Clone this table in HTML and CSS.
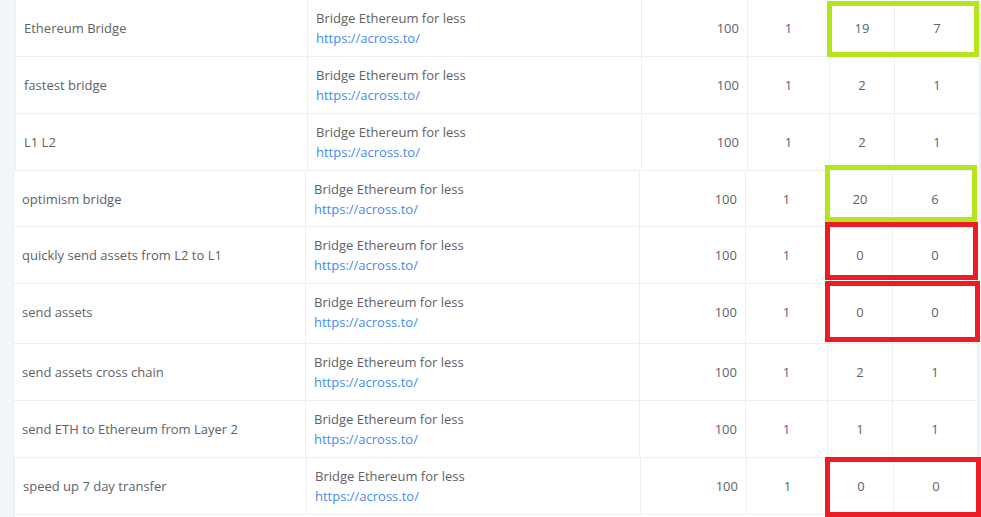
FILE: index.html
```html
<!DOCTYPE html>
<html lang="en">
  <head>
    <meta charset="UTF-8" />
    <meta name="viewport" content="width=device-width, initial-scale=1.0" />
    <title>Keyword Ranking</title>
    <link rel="stylesheet" href="styles.css">
  </head>
  <body>
    <div class="page">
      <!-- first capture -->
      <div class="table seg-a">
        <div class="row first">
          <div class="cell">Ethereum Bridge</div>
          <div class="cell ad"><span>Bridge Ethereum for less</span><a href="#">https://across.to/</a></div>
          <div class="cell num">100</div>
          <div class="cell mid">1</div>
          <div class="cell mid">19</div>
          <div class="cell mid">7</div>
        </div>
        <div class="row">
          <div class="cell">fastest bridge</div>
          <div class="cell ad"><span>Bridge Ethereum for less</span><a href="#">https://across.to/</a></div>
          <div class="cell num">100</div>
          <div class="cell mid">1</div>
          <div class="cell mid">2</div>
          <div class="cell mid">1</div>
        </div>
        <div class="row">
          <div class="cell">L1 L2</div>
          <div class="cell ad"><span>Bridge Ethereum for less</span><a href="#">https://across.to/</a></div>
          <div class="cell num">100</div>
          <div class="cell mid">1</div>
          <div class="cell mid">2</div>
          <div class="cell mid">1</div>
        </div>
      </div>

      <!-- second capture -->
      <div class="table seg-b">
        <div class="row short">
          <div class="cell">optimism bridge</div>
          <div class="cell ad"><span>Bridge Ethereum for less</span><a href="#">https://across.to/</a></div>
          <div class="cell num">100</div>
          <div class="cell mid">1</div>
          <div class="cell mid">20</div>
          <div class="cell mid">6</div>
        </div>
        <div class="row">
          <div class="cell">quickly send assets from L2 to L1</div>
          <div class="cell ad"><span>Bridge Ethereum for less</span><a href="#">https://across.to/</a></div>
          <div class="cell num">100</div>
          <div class="cell mid">1</div>
          <div class="cell mid">0</div>
          <div class="cell mid">0</div>
        </div>
        <div class="row tall">
          <div class="cell">send assets</div>
          <div class="cell ad"><span>Bridge Ethereum for less</span><a href="#">https://across.to/</a></div>
          <div class="cell num">100</div>
          <div class="cell mid">1</div>
          <div class="cell mid">0</div>
          <div class="cell mid">0</div>
        </div>
        <div class="row">
          <div class="cell">send assets cross chain</div>
          <div class="cell ad"><span>Bridge Ethereum for less</span><a href="#">https://across.to/</a></div>
          <div class="cell num">100</div>
          <div class="cell mid">1</div>
          <div class="cell mid">2</div>
          <div class="cell mid">1</div>
        </div>
        <div class="row">
          <div class="cell">send ETH to Ethereum from Layer 2</div>
          <div class="cell ad"><span>Bridge Ethereum for less</span><a href="#">https://across.to/</a></div>
          <div class="cell num">100</div>
          <div class="cell mid">1</div>
          <div class="cell mid">1</div>
          <div class="cell mid">1</div>
        </div>
      </div>

      <!-- third capture -->
      <div class="table seg-c">
        <div class="row">
          <div class="cell">speed up 7 day transfer</div>
          <div class="cell ad"><span>Bridge Ethereum for less</span><a href="#">https://across.to/</a></div>
          <div class="cell num">100</div>
          <div class="cell mid">1</div>
          <div class="cell mid">0</div>
          <div class="cell mid">0</div>
        </div>
      </div>

      <!-- hand-drawn highlight boxes -->
      <div class="mark green" style="left: 827px; top: 1px; width: 152px; height: 56px;"></div>
      <div class="mark green" style="left: 825px; top: 165px; width: 152px; height: 57px;"></div>
      <div class="mark red" style="left: 825px; top: 222px; width: 153px; height: 58px;"></div>
      <div class="mark red" style="left: 825px; top: 281px; width: 155px; height: 61px;"></div>
      <div class="mark red" style="left: 825px; top: 457px; width: 156px; height: 60px;"></div>
    </div>
  </body>
</html>
```

FILE: styles.css
```css
html,
body {
  margin: 0;
  padding: 0;
}

body {
  font-family: "Open Sans", "Liberation Sans", sans-serif;
  font-size: 13px;
  color: #606266;
  background-color: #f3f6f9;
  height: 517px;
  overflow: hidden;
}

.page {
  position: relative;
  height: 517px;
}

.table {
  background-color: #fff;
  border-left: 1px solid #ebeef5;
  width: 963px;
}

.seg-a {
  margin-left: 15px;
}

.seg-b {
  margin-left: 13px;
}

.seg-c {
  margin-left: 14px;
  height: 59px;
}

.row {
  display: grid;
  grid-template-columns: 292px 334px 106px 82px 65px 85px;
  height: 57px;
  border-bottom: 1px solid #ebeef5;
  box-sizing: border-box;
}

.row.short {
  height: 56px;
}

.row.tall {
  height: 60px;
}

.row.tall .cell {
  padding-bottom: 4px;
}

.cell {
  display: flex;
  align-items: center;
  padding: 0 8px;
  border-right: 1px solid #ebeef5;
  white-space: nowrap;
}

.cell.ad {
  flex-direction: column;
  align-items: flex-start;
  justify-content: center;
  line-height: 20px;
}

.cell.ad a {
  color: #3f8cf0;
  text-decoration: none;
}

.cell.num {
  justify-content: flex-end;
}

.cell.mid {
  justify-content: center;
}

.mark {
  position: absolute;
  box-sizing: border-box;
  border: 5px solid;
}

.mark.green {
  border-color: #b5e61d;
}

.mark.red {
  border-color: #ed1c24;
}
```
